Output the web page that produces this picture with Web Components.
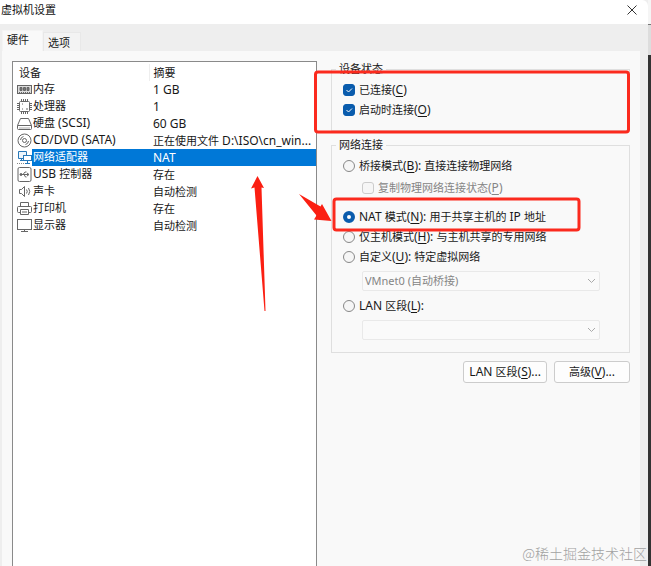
<!DOCTYPE html>
<html lang="zh-CN">
<head>
<meta charset="utf-8">
<title>虚拟机设置</title>
<style>
  html, body { margin: 0; height: 100%; }
  body {
    font: 11px/16px "Noto Sans", "Noto Sans CJK SC", sans-serif;
    color: #181818; background: #333; overflow: hidden;
  }
</style>
</head>
<body>
<vm-dialog></vm-dialog>
<script>
// Turns "模式(&N)" into markup: Latin runs get their own size, "&" marks the access key.
const rich = s => s.replace(/[^\u4e00-\u9fff]+/g, m =>
  `<span class="l">${m.replace(/&(\w)/g, '<u>$1</u>')}</span>`);

const base = `
  * { box-sizing: border-box; }
  .l { font-size: 12px; }
  u { text-underline-offset: 2px; text-decoration-thickness: 1px; }
  button, select, input { font: inherit; color: inherit; margin: 0; }
`;

class Base extends HTMLElement {
  connectedCallback() {
    if (this.shadowRoot) return;
    this.attachShadow({ mode: 'open' }).innerHTML =
      `<style>${base}${this.css()}</style>${this.html()}`;
  }
}

customElements.define('vm-titlebar', class extends Base {
  css() { return `
    :host { display: flex; align-items: center; justify-content: space-between;
      height: 24px; background: #fff; padding: 0 10px 0 1px; border-radius: 0 6px 0 0; }
    h1 { margin: 0; font-size: 11px; font-weight: 400; line-height: 20px; padding-bottom: 4px; color: #111; }
    button { border: 0; padding: 0; background: none; width: 12px; height: 12px; display: flex; margin-bottom: 4px; }
  `; }
  html() { return `<h1>${rich('虚拟机设置')}</h1>
    <button aria-label="关闭"><svg width="12" height="12" viewBox="0 0 12 12"><path d="M1.5 1.5l9 9M10.5 1.5l-9 9" stroke="#333" fill="none"/></svg></button>`; }
});

customElements.define('vm-tabs', class extends Base {
  css() { return `
    :host { display: flex; align-items: flex-end; height: 27px; padding-left: 2px; background: #eee; }
    button { height: 19px; padding: 0 10px 0 4px; background: #f3f3f3; border: 1px solid #e8e8e8; border-bottom: 0; line-height: 17px; }
    button[aria-selected=true] { height: 21px; padding: 0 13px 3px 4px; background: #f9f9f9; border-color: #f4f4f4; }
  `; }
  html() { return `<button role="tab" aria-selected="true">硬件</button><button role="tab" aria-selected="false">选项</button>`; }
});

const icons = {
  memory: '<rect x=".5" y="3.5" width="14" height="8" fill="#ddd"/><path d="M3 5.5h2v3H3zM6.500 5.5h2v3h-2zM10 5.500h2v3h-2z" fill="#777"/><path d="M2.500 10v2M4.500 10v2M6.500 10v2M8.500 10v2M10.500 10v2M12.500 10v2"/>',
  cpu: '<rect x="2.500" y="2.500" width="10" height="10" rx="1"/><path d="M4.500 2V0M6.500 2V0M8.500 2V0M10.500 2V0M4.500 13v2M6.500 13v2M8.500 13v2M10.500 13v2M2 4.500H0M2 6.500H0M2 8.500H0M2 10.500H0M13 4.500h2M13 6.500h2M13 8.500h2M13 10.500h2M5 5h1M9 10h2M5 10h1"/>',
  disk: '<path d="M3.500 2.500h8l3 7v3a1 1 0 0 1-1 1h-12a1 1 0 0 1-1-1v-3zM.5 9.500h14"/><path d="M2 12h11" stroke="#aaa"/>',
  cd: '<circle cx="7.500" cy="7.500" r="6.500"/><circle cx="7.500" cy="7.500" r="2"/><path d="M3.500 7a4 4 0 0 1 3-3.500M11.500 8a4 4 0 0 1-3 3.500"/>',
  net: '<path d="M7 8.500H1.500v-7h8V5" stroke="#2878b8" fill="#eef6fc"/><path d="M3 10.500h3M4.500 8.500v2" stroke="#2878b8"/><rect x="6.500" y="5.500" width="8" height="5" stroke="#2878b8" fill="#fff"/><path d="M10.500 11v2M8 13.500h5" stroke="#2878b8"/><path d="M0 13.500h7" stroke-dasharray="1 1" stroke="#888"/>',
  usb: '<rect x="1" y=".5" width="13" height="14" rx="1.500"/><path d="M3.500 7.500h8M6 7.500l2-2.500h1.500M7 7.500l1.500 2.500h1M10 6l2 1.500L10 9"/><circle cx="4" cy="7.500" r="1" fill="#666"/>',
  sound: '<path d="M2.500 5.500h2l3-3v10l-3-3h-2z"/><path d="M9.500 5.500q1.500 2 0 4M11.500 4q2.500 3.500 0 7"/>',
  printer: '<path d="M3.500 5.500v-4h8v4M3.500 11.500h-2a1 1 0 0 1-1-1v-4a1 1 0 0 1 1-1h12a1 1 0 0 1 1 1v4a1 1 0 0 1-1 1h-2"/><path d="M3.500 8.500h8v5h-8zM5 11h5"/>',
  display: '<rect x=".5" y="1.500" width="14" height="10"/><path d="M7.500 12v2M4 13.500h7"/>'
};

customElements.define('vm-devices', class extends Base {
  css() { return `
    :host { display: block; background: #fff; border: 1px solid #8a8a8a; border-bottom: 0; padding: 2px 0 0; }
    table { border-collapse: collapse; width: 100%; table-layout: fixed; }
    th, td { padding: 0; height: 17px; line-height: 16px; font-weight: 400; text-align: left; white-space: nowrap; }
    th:first-child { width: 136px; padding-left: 6px; border-right: 1px solid #eee; }
    th:last-child { padding-left: 4px; }
    td:last-child { padding-left: 4px; overflow: hidden; text-overflow: ellipsis; }
    .name { display: flex; padding-left: 4px; }
    .name svg { flex: none; width: 15px; height: 15px; margin-top: 1px; }
    .name b { flex: 1; font-weight: 400; padding-left: 1px; height: 17px; }
    .sel b, .sel td:last-child { background: #0078d7; color: #fff; }
  `; }
  html() {
    const rows = [['memory','内存','1 GB'],['cpu','处理器','1'],['disk','硬盘 (SCSI)','60 GB'],
      ['cd','CD/DVD (SATA)','正在使用文件 D:\\ISO\\cn_win...'],['net','网络适配器','NAT'],
      ['usb','USB 控制器','存在'],['sound','声卡','自动检测'],['printer','打印机','存在'],['display','显示器','自动检测']];
    return `<table><thead><tr><th>设备</th><th>摘要</th></tr></thead><tbody>${rows.map(([i, n, s]) =>
      `<tr class="${i === 'net' ? 'sel' : ''}"><td><div class="name"><svg viewBox="0 0 15 15" fill="none" stroke="#666">${icons[i]}</svg><b>${rich(n)}</b></div></td><td>${rich(s)}</td></tr>`).join('')}</tbody></table>`;
  }
});

const controls = `
  :host { display: block; }
  fieldset { margin: 0; min-width: 0; border: 1px solid #dfdfdf; padding: 0 29px 0 11px; }
  legend { padding: 0 3px; margin-left: -7px; line-height: 16px; }
  label { display: flex; align-items: center; gap: 4px; height: 20px; white-space: nowrap; }
  input { appearance: none; flex: none; width: 12px; height: 12px; border: 1px solid #888; background: #f6f6f6; }
  input[type=checkbox] { border-radius: 3px; }
  input[type=checkbox]:checked { border-color: #0a5cad; background: #0a5cad
    url('data:image/svg+xml,<svg xmlns="http://www.w3.org/2000/svg" viewBox="0 0 10 10"><path d="M2.500 5l2 2 3.500-3.500" fill="none" stroke="white"/></svg>'); }
  input[type=radio] { border-radius: 50%; }
  input[type=radio]:checked { border: 4px solid #0a5cad; background: #fff; }
  .off { color: #858585; }
  .off input { border-color: #ccc; }
`;

customElements.define('vm-status', class extends Base {
  css() { return controls + `fieldset { padding-bottom: 10px; } legend + label { margin-top: 3px; }`; }
  html() { return `<fieldset><legend>设备状态</legend>
    <label><input type="checkbox" checked><span>${rich('已连接(&C)')}</span></label>
    <label><input type="checkbox" checked><span>${rich('启动时连接(&O)')}</span></label></fieldset>`; }
});

customElements.define('vm-network', class extends Base {
  css() { return controls + `
    fieldset { padding-bottom: 12px; }
    legend + label { margin-top: 3px; }
    .off { margin: 2px 0 9px 19px; }
    .pick { position: relative; margin: 4px 0 5px 19px; }
    .pick select { display: block; appearance: none; width: 100%; height: 20px; padding: 0 2px; color: #858585;
      border: 1px solid #e9e9e9; border-radius: 2px; background: #fafafa; opacity: 1; }
    .pick svg { position: absolute; right: 4px; top: 7px; }
    .pick:last-child { margin-bottom: 0; }
  `; }
  html() {
    const radio = (t, c = '') => `<label><input type="radio" name="mode" ${c}><span>${rich(t)}</span></label>`;
    const pick = (n, v) => `<div class="pick"><select disabled aria-label="${n}"><option>${v}</option></select>
      <svg width="9" height="6" viewBox="0 0 9 6"><path d="M1 1l3.500 3.500L8 1" fill="none" stroke="#aaa"/></svg></div>`;
    return `<fieldset><legend>网络连接</legend>
      ${radio('桥接模式(&B): 直接连接物理网络')}
      <label class="off"><input type="checkbox" disabled><span>${rich('复制物理网络连接状态(&P)')}</span></label>
      ${radio('NAT 模式(&N): 用于共享主机的 IP 地址', 'checked')}
      ${radio('仅主机模式(&H): 与主机共享的专用网络')}
      ${radio('自定义(&U): 特定虚拟网络')}
      ${pick('虚拟网络', 'VMnet0 (自动桥接)')}
      ${radio('LAN 区段(&L):')}
      ${pick('LAN 区段', '')}
    </fieldset>`;
  }
});

customElements.define('vm-actions', class extends Base {
  css() { return `
    :host { display: flex; justify-content: flex-end; gap: 7px; }
    button { height: 22px; min-width: 76px; padding: 0 5px; line-height: 18px; border: 1px solid #ccc; border-radius: 3px; background: #fdfdfd; }
  `; }
  html() { return `<button>${rich('LAN 区段(&S)...')}</button><button>${rich('高级(&V)...')}</button>`; }
});

customElements.define('vm-marks', class extends Base {
  css() { return `
    :host { position: absolute; inset: 0; pointer-events: none; }
    svg { position: absolute; left: 0; top: 0; }
    p { position: absolute; right: 4px; bottom: 3px; margin: 0; font: 300 14px/20px "Noto Sans CJK SC", sans-serif; color: #a2a2a2; }
  `; }
  html() { return `<svg width="651" height="566" viewBox="0 0 651 566" aria-hidden="true">
      <g fill="none" stroke="#fb2a1e" stroke-width="3"><rect x="315.500" y="72" width="313" height="60" rx="2.500"/><rect x="334" y="199" width="245" height="31" rx="2.500"/></g>
      <g fill="#fb1f12"><path d="M257.500 176l6.500 12-2.500-.5L265.500 311h-1L254.500 187.500l-3.500 1z"/><path d="M299 194l21.500 12.500 1.500-2.500 9.500 17-17.500-1.500 2.500-4z"/></g></svg>
    <p>@稀土掘金技术社区</p>`; }
});

customElements.define('vm-dialog', class extends Base {
  css() { return `
    :host { display: grid; grid-template-columns: 1fr 3px; height: 100%; position: relative; overflow: hidden; }
    .win { display: flex; flex-direction: column; background: #eee; min-height: 0; }
    .page { flex: 1; display: grid; grid-template-columns: 305px 1fr; gap: 14px; margin: 0 8px 0 2px; padding: 10px 10px 0; background: #f9f9f9; }
    .right { display: flex; flex-direction: column; }
    vm-network { margin-top: 6px; }
    vm-actions { margin-top: 8px; }
    .edge { background: linear-gradient(#f5f5f5 24px, #777 24px, #777 25px, #ddd 25px, #ddd 55px, #333 55px); }
  `; }
  html() { return `<div class="win"><vm-titlebar></vm-titlebar><vm-tabs role="tablist"></vm-tabs>
    <div class="page"><vm-devices></vm-devices>
      <div class="right"><vm-status></vm-status><vm-network></vm-network><vm-actions></vm-actions></div></div></div>
    <div class="edge"></div><vm-marks></vm-marks>`; }
});
</script>
</body>
</html>
